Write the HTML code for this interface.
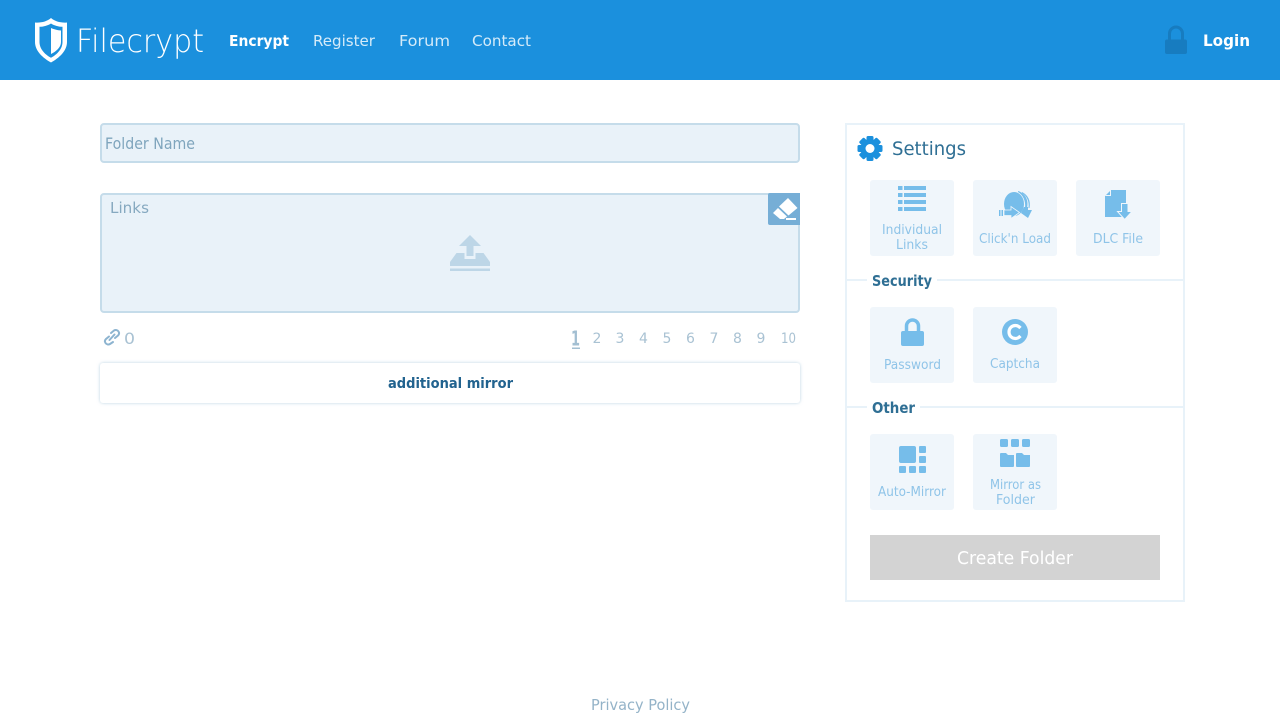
<!DOCTYPE html>
<html><head><meta charset="utf-8"><title>Filecrypt</title>
<style>
html,body{margin:0;padding:0;background:#fff;width:1280px;height:720px;overflow:hidden}
svg{display:block}
text{font-family:"DejaVu Sans","Liberation Sans",sans-serif}
.t{font-size:13px;fill:#8fc4e8;text-anchor:start}
.p{font-size:14px;fill:#a9c2d3}
</style></head><body>
<svg width="1280" height="720" viewBox="0 0 1280 720" xmlns="http://www.w3.org/2000/svg">
<defs><filter id="sh" x="-2%" y="-20%" width="104%" height="140%"><feDropShadow dx="0" dy="0" stdDeviation="1.500" flood-color="#a9c8dd" flood-opacity=".8"/></filter></defs>
<rect width="1280" height="80" fill="#1b90dd"/>
<!-- logo -->
<path d="M51 18C47 21.500 41 23 35 22.500V42C35 51 43 58 51 62.500C59 58 67 51 67 42V22.500C61 23 55 21.500 51 18Z" fill="#fff"/>
<path d="M51 23.500C48 25.500 43.500 26.800 39.500 26.800V42C39.500 49 45 54.500 51 57.800C57 54.500 62.500 49 62.500 42V26.800C58.500 26.800 54 25.500 51 23.500Z" fill="#1b90dd"/>
<path d="M51 28C53.500 29.300 58 30.300 61 30.500V42C61 47.500 56 51.500 51 54Z" fill="#fff"/>
<text x="76" y="52" font-size="32" font-weight="200" fill="#fff" textLength="128" lengthAdjust="spacingAndGlyphs">Filecrypt</text>
<text x="229" y="46" font-size="15" font-weight="700" fill="#fff" textLength="60" lengthAdjust="spacingAndGlyphs">Encrypt</text>
<text x="313" y="46" font-size="15" fill="#d5ebf9" textLength="62" lengthAdjust="spacingAndGlyphs">Register</text>
<text x="399" y="46" font-size="15" fill="#d5ebf9" textLength="51" lengthAdjust="spacingAndGlyphs">Forum</text>
<text x="472" y="46" font-size="15" fill="#d5ebf9" textLength="59" lengthAdjust="spacingAndGlyphs">Contact</text>
<path d="M1169.500 41V33.500A6.500 6.500 0 0 1 1182.500 33.500V41" fill="none" stroke="#177cc0" stroke-width="3"/>
<rect x="1165" y="39.500" width="22" height="14.500" rx="2" fill="#177cc0"/>
<text x="1203" y="46" font-size="16" font-weight="700" fill="#fff" textLength="47" lengthAdjust="spacingAndGlyphs">Login</text>

<!-- Folder name -->
<rect x="101" y="124" width="698" height="38" rx="3" fill="#e9f2f9" stroke="#c5dcea" stroke-width="2"/>
<text x="105" y="149" font-size="16" fill="#7fa5bd" textLength="90" lengthAdjust="spacingAndGlyphs">Folder Name</text>
<!-- Links -->
<rect x="101" y="194" width="698" height="118" rx="3" fill="#e9f2f9" stroke="#c5dcea" stroke-width="2"/>
<text x="110" y="213" font-size="15.500" fill="#86a9c0" textLength="39" lengthAdjust="spacingAndGlyphs">Links</text>
<path d="M470 235L481 246H473.500V256H466.500V246H459Z" fill="#bdd6e7"/>
<path d="M456.500 253H464.500V259H475.500V253H483.500L490 262V266H450V262Z" fill="#bdd6e7"/>
<rect x="450" y="268.500" width="40" height="2.500" fill="#bdd6e7"/>
<!-- eraser -->
<path d="M768 195a2 2 0 0 1 2-2H800V225H770a2 2 0 0 1-2-2Z" fill="#76aed6"/>
<path d="M788 198L797.500 208L788.500 215.500L779 206.500Z" fill="#fff"/>
<path d="M778 208L787 216.500L784 219H780L773 213Z" fill="#fff"/>
<rect x="786" y="218" width="10" height="2" fill="#fff"/>
<!-- count -->
<g fill="none" stroke="#8db4d0" stroke-width="2" stroke-linecap="round">
<path d="M111 333L114 330.500C115.500 329.500 117.500 330 118.500 331.500C119.500 333 119 334.500 118 335.500L115 338"/>
<path d="M113 342L110 344C108.500 345 106.500 344.500 105.500 343C104.500 341.500 105 340 106 339L109 336.500"/>
<path d="M109.500 340L114.500 334.500"/>
</g>
<text x="124" y="344" font-size="16" fill="#a9c2d3" textLength="11" lengthAdjust="spacingAndGlyphs">0</text>
<text x="571" y="345.500" font-size="20" font-weight="700" fill="#a3bfd2" textLength="9" lengthAdjust="spacingAndGlyphs">1</text>
<rect x="572" y="347.500" width="8" height="1.500" fill="#a3bfd2"/>
<text class="p" x="592.500" y="343">2</text>
<text class="p" x="615.500" y="343">3</text>
<text class="p" x="639" y="343">4</text>
<text class="p" x="662.500" y="343">5</text>
<text class="p" x="686" y="343">6</text>
<text class="p" x="709.500" y="343">7</text>
<text class="p" x="733" y="343">8</text>
<text class="p" x="756.500" y="343">9</text>
<text class="p" x="781" y="343" textLength="15" lengthAdjust="spacingAndGlyphs">10</text>
<!-- mirror -->
<rect x="100" y="363" width="700" height="40" rx="3" fill="#fff" filter="url(#sh)"/>
<text x="388" y="388" font-size="14.500" font-weight="700" fill="#22638f" textLength="125" lengthAdjust="spacingAndGlyphs">additional mirror</text>

<!-- Settings panel -->
<rect x="846" y="124" width="338" height="477" fill="#fff" stroke="#e8f2f9" stroke-width="2"/>
<g fill="#1b90dd">
<rect x="866.500" y="136" width="7" height="25" rx="1.500"/>
<rect x="866.500" y="136" width="7" height="25" rx="1.500" transform="rotate(45 870 148.500)"/>
<rect x="866.500" y="136" width="7" height="25" rx="1.500" transform="rotate(90 870 148.500)"/>
<rect x="866.500" y="136" width="7" height="25" rx="1.500" transform="rotate(135 870 148.500)"/>
<circle cx="870" cy="148.500" r="9.500"/>
</g>
<circle cx="870" cy="148.500" r="4.500" fill="#fff"/>
<text x="892" y="155" font-size="19" fill="#2f6f94" textLength="74" lengthAdjust="spacingAndGlyphs">Settings</text>

<g fill="#f0f6fb">
<rect x="870" y="180" width="84" height="76" rx="3"/>
<rect x="973" y="180" width="84" height="76" rx="3"/>
<rect x="1076" y="180" width="84" height="76" rx="3"/>
<rect x="870" y="307" width="84" height="76" rx="3"/>
<rect x="973" y="307" width="84" height="76" rx="3"/>
<rect x="870" y="434" width="84" height="76" rx="3"/>
<rect x="973" y="434" width="84" height="76" rx="3"/>
</g>

<!-- Individual links icon -->
<g fill="#76bdea">
<rect x="898" y="186" width="4.500" height="4"/><rect x="904" y="186" width="22" height="4"/>
<rect x="898" y="193" width="4.500" height="4"/><rect x="904" y="193" width="22" height="4"/>
<rect x="898" y="200" width="4.500" height="4"/><rect x="904" y="200" width="22" height="4"/>
<rect x="898" y="207" width="4.500" height="4"/><rect x="904" y="207" width="22" height="4"/>
</g>
<text class="t" x="882" y="234" textLength="60" lengthAdjust="spacingAndGlyphs">Individual</text>
<text class="t" x="896" y="249" textLength="32" lengthAdjust="spacingAndGlyphs">Links</text>
<!-- CnL icon -->
<g fill="#76bdea">
<ellipse cx="1014" cy="204" rx="10" ry="12"/>
<path d="M1018 191C1025 193 1029 200 1027 208L1025 208C1026 201 1023 195 1018 192Z"/>
<path d="M1022 192C1028 195 1031 201 1029.500 208L1028.500 208C1029.500 202 1027 196 1022 193Z"/>
<path d="M1024 207H1028V210H1032L1028 218L1021 213Z"/>
<rect x="999" y="210" width="1.500" height="6"/><rect x="1001.500" y="210" width="1.500" height="6"/>
<path d="M1004 210H1011V206.500L1019.500 212.500L1011 218.500V215.500H1004Z" stroke="#f0f6fb" stroke-width=".8"/>
</g>
<text class="t" x="979" y="243" textLength="72" lengthAdjust="spacingAndGlyphs">Click'n Load</text>
<!-- DLC icon -->
<path fill="#76bdea" d="M1111 190H1126V217H1105V196Z"/>
<path fill="none" stroke="#f0f6fb" d="M1105.500 195.500H1110.500V190"/>
<path fill="#76bdea" stroke="#f0f6fb" d="M1121.500 203.500H1128V211.500H1132L1124.700 219.500L1117.500 211.500H1121.500Z"/>
<text class="t" x="1093" y="243" textLength="50" lengthAdjust="spacingAndGlyphs">DLC File</text>

<!-- Security -->
<rect x="847" y="279" width="20" height="2" fill="#e8f2f9"/>
<rect x="937" y="279" width="247" height="2" fill="#e8f2f9"/>
<text x="872" y="286" font-size="15" font-weight="700" fill="#2f6f94" textLength="60" lengthAdjust="spacingAndGlyphs">Security</text>
<!-- Password -->
<path d="M906.500 334V326A6 6 0 0 1 918.500 326V334" fill="none" stroke="#76bdea" stroke-width="3.500"/>
<rect x="901" y="331" width="23" height="15" rx="2" fill="#76bdea"/>
<text class="t" x="884" y="369" textLength="57" lengthAdjust="spacingAndGlyphs">Password</text>
<!-- Captcha -->
<circle cx="1015" cy="332" r="13" fill="#76bdea"/>
<path d="M1020.500 328C1019 326.500 1017.500 325.500 1015.500 325.500C1011.500 325.500 1009 328.500 1009 332C1009 335.500 1011.500 338.500 1015.500 338.500C1017.500 338.500 1019 337.500 1020.500 336" fill="none" stroke="#fff" stroke-width="3.200"/>
<text class="t" x="990" y="368" textLength="50" lengthAdjust="spacingAndGlyphs">Captcha</text>

<!-- Other -->
<rect x="847" y="406" width="20" height="2" fill="#e8f2f9"/>
<rect x="920" y="406" width="264" height="2" fill="#e8f2f9"/>
<text x="872" y="413" font-size="15" font-weight="700" fill="#2f6f94" textLength="43" lengthAdjust="spacingAndGlyphs">Other</text>
<!-- Auto-Mirror -->
<g fill="#76bdea">
<rect x="899" y="446" width="17" height="17" rx="2"/>
<rect x="919" y="446" width="7" height="7" rx="1"/>
<rect x="919" y="456" width="7" height="7" rx="1"/>
<rect x="899" y="466" width="7" height="7" rx="1"/>
<rect x="909" y="466" width="7" height="7" rx="1"/>
<rect x="919" y="466" width="7" height="7" rx="1"/>
</g>
<text class="t" x="878" y="496" textLength="68" lengthAdjust="spacingAndGlyphs">Auto-Mirror</text>
<!-- Mirror as folder -->
<g fill="#76bdea">
<rect x="1000" y="439" width="8" height="8" rx="1.500"/>
<rect x="1011" y="439" width="8" height="8" rx="1.500"/>
<rect x="1022" y="439" width="8" height="8" rx="1.500"/>
<path d="M1000 454a1 1 0 0 1 1-1H1006L1008 455H1014V466a1 1 0 0 1-1 1H1001a1 1 0 0 1-1-1Z"/>
<path d="M1016 454a1 1 0 0 1 1-1H1022L1024 455H1030V466a1 1 0 0 1-1 1H1017a1 1 0 0 1-1-1Z"/>
</g>
<text class="t" x="990" y="489" textLength="51" lengthAdjust="spacingAndGlyphs">Mirror as</text>
<text class="t" x="996" y="504" textLength="39" lengthAdjust="spacingAndGlyphs">Folder</text>

<!-- Create -->
<rect x="870" y="535" width="290" height="45" fill="#d3d3d3"/>
<text x="957" y="564" font-size="17.500" fill="#fff" textLength="116" lengthAdjust="spacingAndGlyphs">Create Folder</text>
<text x="591" y="710" font-size="15" fill="#94b3c8" textLength="99" lengthAdjust="spacingAndGlyphs">Privacy Policy</text>
</svg>
</body></html>
